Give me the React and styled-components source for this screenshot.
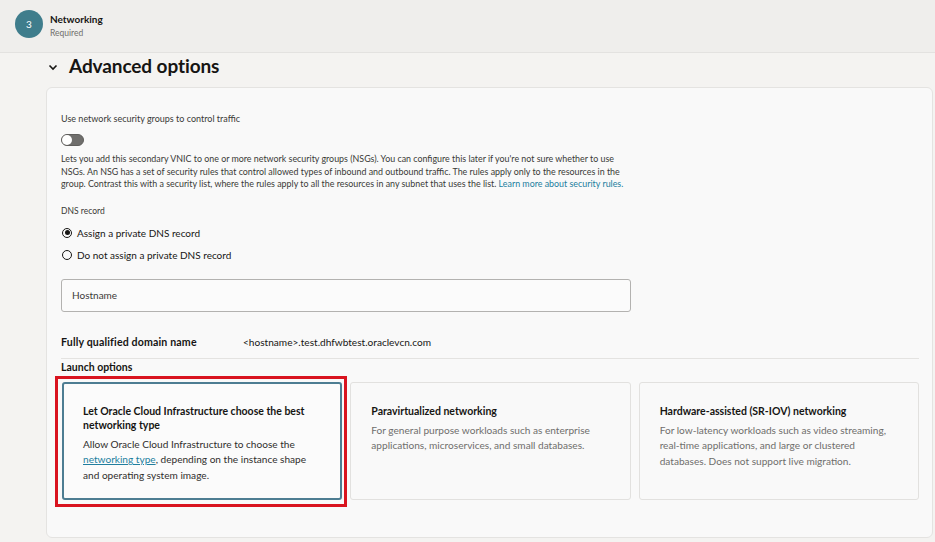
import React, { useState } from 'react'
import styled, { createGlobalStyle } from 'styled-components'

const GlobalStyle = createGlobalStyle`
  body {
    margin: 0;
    background: #f4f3f1;
    font-family: Lato, "Noto Sans", sans-serif;
    color: #161513;
  }
`

const Page = styled.div`
  width: 935px;
  min-height: 542px;
`

const StepHeader = styled.header`
  height: 53px;
  box-sizing: border-box;
  background: #efeeec;
  border-bottom: 1px solid #e3e2e0;
  display: flex;
  align-items: flex-start;
  gap: 7px;
  padding: 10px 0 0 15px;
`

const StepBadge = styled.div`
  width: 28px;
  height: 28px;
  border-radius: 50%;
  background: #3f7d8c;
  color: #fff;
  font-size: 10px;
  display: flex;
  align-items: center;
  justify-content: center;
`

const StepText = styled.div`
  display: flex;
  flex-direction: column;
  padding-top: 3px;
`

const StepTitle = styled.span`
  font-size: 10px;
  font-weight: 700;
  line-height: 13px;
`

const StepSub = styled.span`
  font-size: 8.5px;
  color: #6f6e6c;
  line-height: 14px;
`

const Section = styled.section`
  padding: 0 2px 6px 46px;
`

const SectionHead = styled.div`
  height: 34px;
  box-sizing: border-box;
  padding-top: 1px;
  display: flex;
  align-items: flex-start;
  gap: 11px;
`

const Chevron = styled.svg`
  width: 10px;
  height: 10px;
  margin: 8px 0 0 2px;
`

const SectionTitle = styled.h2`
  margin: 0;
  font-size: 19px;
  line-height: 24px;
  font-weight: 700;
  letter-spacing: -0.1px;
`

const Panel = styled.div`
  background: #f9f9f9;
  border: 1px solid #e4e3e1;
  border-radius: 6px;
  padding: 25px 13px 37px 14px;
  display: flex;
  flex-direction: column;
`

const FieldLabel = styled.div`
  font-size: ${p => p.size || 9}px;
  line-height: 12px;
  color: #3a3937;
`

const Toggle = styled.button`
  width: 23px;
  height: 12px;
  margin: 9px 0 7px;
  padding: 0;
  border: 1px solid #5f5e5c;
  border-radius: 6px;
  background: #6f6e6c;
  position: relative;
  cursor: pointer;

  &::after {
    content: '';
    position: absolute;
    top: 0;
    left: ${p => (p.on ? '11px' : '0')};
    width: 10px;
    height: 10px;
    border-radius: 50%;
    background: #fff;
  }
`

const HelpText = styled.p`
  margin: 0 0 14px;
  font-size: 8.9px;
  line-height: 12.5px;
  color: #3a3937;
  white-space: nowrap;
`

const Link = styled.a`
  color: #227e9e;
  text-decoration: ${p => (p.underline ? 'underline' : 'none')};
`

const RadioList = styled.div`
  display: flex;
  flex-direction: column;
  margin-top: 5px;
`

const RadioRow = styled.label`
  display: flex;
  align-items: center;
  gap: 5px;
  height: 22.5px;
  font-size: 10px;
  cursor: pointer;
`

const RadioDot = styled.span`
  width: 10px;
  height: 10px;
  box-sizing: border-box;
  border-radius: 50%;
  border: 1.2px solid #161513;
  display: flex;
  align-items: center;
  justify-content: center;
  margin-left: 1px;

  &::after {
    content: '';
    width: 5px;
    height: 5px;
    border-radius: 50%;
    background: ${p => (p.checked ? '#161513' : 'transparent')};
  }
`

const InputBox = styled.input`
  width: 570px;
  height: 33px;
  box-sizing: border-box;
  margin-top: 12px;
  border: 1px solid #b3b2b0;
  border-radius: 3px;
  background: #fbfbfb;
  padding: 0 10px;
  font-family: inherit;
  font-size: 10px;
  color: #161513;

  &::placeholder {
    color: #3a3937;
  }
`

const InfoRow = styled.div`
  display: flex;
  align-items: center;
  height: 20px;
  margin-top: 20px;
  font-size: 10.1px;
`

const InfoKey = styled.span`
  width: 182px;
  font-size: 10.6px;
  font-weight: 700;
  letter-spacing: 0.15px;
`

const Divider = styled.hr`
  margin: 6px 0 0;
  border: 0;
  border-top: 1px solid #e4e3e1;
`

const GroupLabel = styled.div`
  font-size: 10.5px;
  font-weight: 700;
  line-height: 14px;
  margin: 1px 0 8px;
`

const Cards = styled.div`
  display: grid;
  grid-template-columns: repeat(3, 1fr);
  gap: 8px;
  margin-left: 1px;
`

const Card = styled.div`
  position: relative;
  height: 118px;
  box-sizing: border-box;
  border: ${p => (p.selected ? '2px solid #4d7d92' : '1px solid #e2e1df')};
  border-radius: 3px;
  background: ${p => (p.selected ? '#fbfbfb' : '#f9f9f9')};
  padding: ${p => (p.selected ? '20px 19px' : '21px 20px')};
  cursor: pointer;
`

const CardTitle = styled.div`
  font-size: 10.5px;
  font-weight: 700;
  line-height: 14px;
  margin-bottom: 5px;
  color: #161513;
`

const CardDesc = styled.div`
  font-size: 10.1px;
  line-height: 15.5px;
  color: ${p => (p.selected ? '#2f2e2c' : '#6f6e6c')};
`

const Highlight = styled.div`
  position: absolute;
  top: -8px;
  left: -9px;
  right: -7px;
  bottom: -9px;
  border: 3px solid #d9141f;
  pointer-events: none;
`

const options = [
  {
    id: 'auto',
    title: 'Let Oracle Cloud Infrastructure choose the best networking type',
    desc: (
      <>
        Allow Oracle Cloud Infrastructure to choose the{' '}
        <Link href="#" underline>networking type</Link>, depending on the instance shape
        and operating system image.
      </>
    ),
  },
  {
    id: 'para',
    title: 'Paravirtualized networking',
    desc: 'For general purpose workloads such as enterprise applications, microservices, and small databases.',
  },
  {
    id: 'sriov',
    title: 'Hardware-assisted (SR-IOV) networking',
    desc: 'For low-latency workloads such as video streaming, real-time applications, and large or clustered databases. Does not support live migration.',
  },
]

const App = () => {
  const [nsg, setNsg] = useState(false)
  const [dns, setDns] = useState('assign')
  const [launch, setLaunch] = useState('auto')

  return (
    <Page>
      <GlobalStyle />
      <StepHeader>
        <StepBadge>3</StepBadge>
        <StepText>
          <StepTitle>Networking</StepTitle>
          <StepSub>Required</StepSub>
        </StepText>
      </StepHeader>

      <Section>
        <SectionHead>
          <Chevron viewBox="0 0 10 10">
            <path d="M1.5 3.5 L5 7 L8.5 3.5" fill="none" stroke="#161513" strokeWidth="1.6" />
          </Chevron>
          <SectionTitle>Advanced options</SectionTitle>
        </SectionHead>

        <Panel>
          <FieldLabel>Use network security groups to control traffic</FieldLabel>
          <Toggle on={nsg} onClick={() => setNsg(!nsg)} aria-label="toggle" />
          <HelpText>
            Lets you add this secondary VNIC to one or more network security groups (NSGs). You can configure this later if you're not sure whether to use
            <br />
            NSGs. An NSG has a set of security rules that control allowed types of inbound and outbound traffic. The rules apply only to the resources in the
            <br />
            group. Contrast this with a security list, where the rules apply to all the resources in any subnet that uses the list.{' '}
            <Link href="#">Learn more about security rules.</Link>
          </HelpText>

          <FieldLabel size={8.5}>DNS record</FieldLabel>
          <RadioList>
            <RadioRow onClick={() => setDns('assign')}>
              <RadioDot checked={dns === 'assign'} />
              Assign a private DNS record
            </RadioRow>
            <RadioRow onClick={() => setDns('none')}>
              <RadioDot checked={dns === 'none'} />
              Do not assign a private DNS record
            </RadioRow>
          </RadioList>

          <InputBox placeholder="Hostname" />

          <InfoRow>
            <InfoKey>Fully qualified domain name</InfoKey>
            <span>&lt;hostname&gt;.test.dhfwbtest.oraclevcn.com</span>
          </InfoRow>
          <Divider />
          <GroupLabel>Launch options</GroupLabel>

          <Cards>
            {options.map(o => (
              <Card key={o.id} selected={launch === o.id} onClick={() => setLaunch(o.id)}>
                <CardTitle>{o.title}</CardTitle>
                <CardDesc selected={launch === o.id}>{o.desc}</CardDesc>
                {o.id === 'auto' && <Highlight />}
              </Card>
            ))}
          </Cards>
        </Panel>
      </Section>
    </Page>
  )
}

export default App
